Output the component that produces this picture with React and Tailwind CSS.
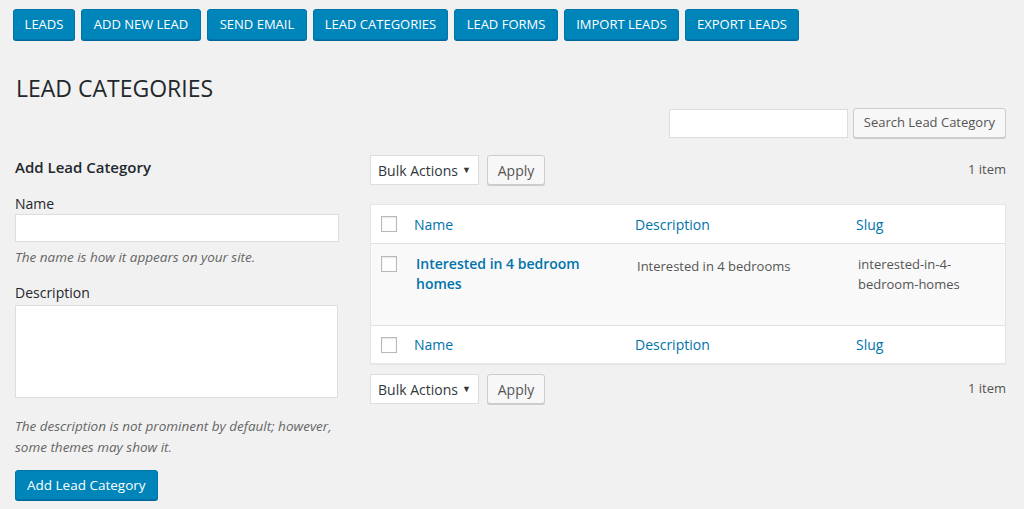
import React from 'react';

const FONT = { fontFamily: '"Open Sans", "Noto Sans", sans-serif' };

const NAV = [
  { label: 'LEADS', w: 'w-[62px]' },
  { label: 'ADD NEW LEAD', w: 'w-[120px]' },
  { label: 'SEND EMAIL', w: 'w-[100px]' },
  { label: 'LEAD CATEGORIES', w: 'w-[135px]' },
  { label: 'LEAD FORMS', w: 'w-[104px]' },
  { label: 'IMPORT LEADS', w: 'w-[115px]' },
  { label: 'EXPORT LEADS', w: 'w-[114px]' },
];

function Checkbox() {
  return <span className="block w-4 h-4 border border-[#b4b9be] bg-white shadow-[inset_0_1px_2px_rgba(0,0,0,0.1)]" />;
}

function BulkBar() {
  return (
    <div className="flex items-center h-[30px]">
      <div className="flex items-center justify-between w-[109px] h-[30px] px-[7px] bg-white border border-[#ddd] text-[14px] text-[#32373c]">
        <span>Bulk Actions</span>
        <span className="text-[9px]">▼</span>
      </div>
      <button className="ml-2 h-[30px] w-[58px] rounded-[3px] border border-[#ccc] bg-[#f7f7f7] text-[14px] text-[#555] shadow-[0_1px_0_#ccc]">
        Apply
      </button>
      <span className="ml-auto text-[13px] text-[#555]">1 item</span>
    </div>
  );
}

function HeadRow({ top }) {
  return (
    <div className={`flex items-center ${top ? 'h-[39px] border-b' : 'h-[38px] border-t'} bg-white border-[#e1e1e1]`}>
      <div className="w-[35px] pl-[10px]"><Checkbox /></div>
      <div className="w-[221px] pl-[8px] text-[14px] text-[#0073aa]">Name</div>
      <div className="w-[221px] pl-[8px] text-[14px] text-[#0073aa]">Description</div>
      <div className="flex-1 pl-[8px] text-[14px] text-[#0073aa]">Slug</div>
    </div>
  );
}

export default function App() {
  return (
    <div style={FONT} className="w-[1024px] h-[509px] bg-[#f1f1f1] text-[#23282d] overflow-hidden">
      <div className="flex items-start gap-[6px] pl-[13px] pt-[9px]">
        {NAV.map((n) => (
          <button
            key={n.label}
            className={`${n.w} h-[31px] rounded-[3px] bg-[#0085ba] border border-[#0073aa] shadow-[0_1px_0_#006799] text-white text-[13px] whitespace-nowrap`}
          >
            {n.label}
          </button>
        ))}
      </div>

      <h1 className="pl-4 mt-[33px] text-[23px] leading-[30px] font-normal">LEAD CATEGORIES</h1>

      <div className="flex justify-end items-center pr-[18px] mt-[5px]">
        <div className="w-[179px] h-[29px] bg-white border border-[#ddd]" />
        <button className="ml-[5px] h-[30px] px-[10px] rounded-[3px] border border-[#ccc] bg-[#f7f7f7] text-[13px] text-[#555] shadow-[0_1px_0_#ccc]">
          Search Lead Category
        </button>
      </div>

      <div className="flex mt-[17px]">
        <div className="w-[370px] shrink-0 pl-[15px] pr-[16px]">
          <h2 className="text-[15px] font-semibold leading-[20px] mt-[2px]">Add Lead Category</h2>
          <div className="mt-[18px] text-[14px] leading-[18px]">Name</div>
          <div className="mt-[1px] w-[324px] h-[28px] bg-white border border-[#ddd]" />
          <p className="mt-[6px] text-[13.5px] italic text-[#666] leading-[18px]">The name is how it appears on your site.</p>
          <div className="mt-[18px] text-[14px] leading-[18px]">Description</div>
          <div className="mt-[3px] w-[323px] h-[93px] bg-white border border-[#ddd]" />
          <p className="mt-[18px] text-[13.5px] italic text-[#666] leading-[21px]">
            The description is not prominent by default; however, some themes may show it.
          </p>
          <button className="mt-[12px] h-[30px] px-[11px] rounded-[3px] bg-[#0085ba] border border-[#0073aa] shadow-[0_1px_0_#006799] text-white text-[13.5px]">
            Add Lead Category
          </button>
        </div>

        <div className="flex-1 pr-[18px]">
          <BulkBar />
          <div className="mt-[19px] border border-[#e5e5e5] bg-white shadow-[0_1px_1px_rgba(0,0,0,0.04)]">
            <HeadRow top />
            <div className="flex h-[81px] bg-[#f9f9f9] pt-[10px]">
              <div className="w-[35px] pl-[10px] pt-[2px]"><Checkbox /></div>
              <div className="w-[221px] pl-[10px] text-[14px] font-semibold text-[#0073aa] leading-[20px]">
                Interested in 4 bedroom homes
              </div>
              <div className="w-[221px] pl-[10px] pt-[2px] text-[13px] text-[#555] leading-[20px]">Interested in 4 bedrooms</div>
              <div className="flex-1 pl-[10px] pr-[30px] text-[13px] text-[#555] leading-[20px]">interested-in-4-bedroom-homes</div>
            </div>
            <HeadRow />
          </div>
          <div className="mt-[10px]">
            <BulkBar />
          </div>
        </div>
      </div>
    </div>
  );
}
